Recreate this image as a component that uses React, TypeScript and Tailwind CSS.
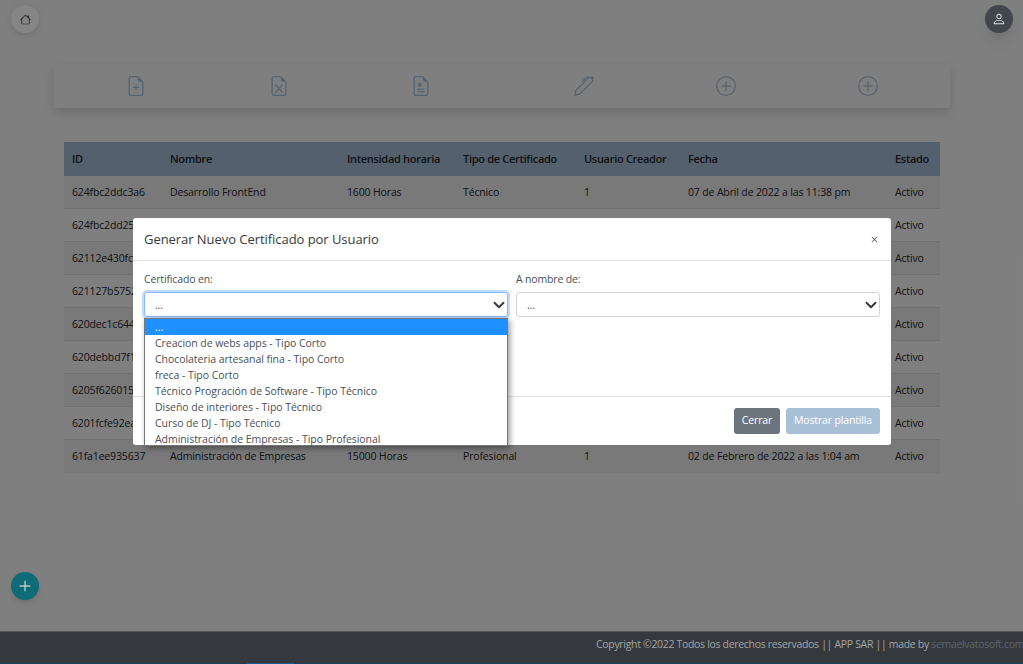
import React from "react";
import { BsHouse, BsPerson, BsFileEarmarkPlus, BsFileEarmarkExcel, BsFileEarmarkMedical, BsPen, BsPlusCircle, BsPlus, BsX } from "react-icons/bs";

const rows = [
  ["624fbc2ddc3a6", "Desarrollo FrontEnd", "1600 Horas", "Técnico", "1", "07 de Abril de 2022 a las 11:38 pm"],
  ["624fbc2dd25", "", "", "", "", ""],
  ["62112e430fc", "", "", "", "", ""],
  ["621127b5752", "", "", "", "", ""],
  ["620dec1c644", "", "", "", "", ""],
  ["620debbd7f1", "", "", "", "", ""],
  ["6205f626015", "", "", "", "", ""],
  ["6201fcfe92ea", "", "", "", "", ""],
  ["61fa1ee935637", "Administración de Empresas", "15000 Horas", "Profesional", "1", "02 de Febrero de 2022 a las 1:04 am"],
];
const options = [
  "Creacion de webs apps - Tipo Corto",
  "Chocolateria artesanal fina - Tipo Corto",
  "freca - Tipo Corto",
  "Técnico Progración de Software - Tipo Técnico",
  "Diseño de interiores - Tipo Técnico",
  "Curso de DJ - Tipo Técnico",
  "Administración de Empresas - Tipo Profesional",
];
const heads = ["ID", "Nombre", "Intensidad horaria", "Tipo de Certificado", "Usuario Creador", "Fecha", "Estado"];

function Chevron() {
  return (
    <svg viewBox="0 0 16 16" className="w-3 h-3" fill="none" stroke="#343a40" strokeWidth="2.6" strokeLinecap="round" strokeLinejoin="round">
      <path d="M2 5l6 6 6-6" />
    </svg>
  );
}

export default function App() {
  const icons = [BsFileEarmarkPlus, BsFileEarmarkExcel, BsFileEarmarkMedical];
  const icons2 = [BsPen, BsPlusCircle, BsPlusCircle];
  return (
    <div className="relative h-[664px] w-[1023px] overflow-hidden bg-white text-[10.5px] tracking-[-0.15px] text-[#212529] flex flex-col" style={{ fontFamily: '"Open Sans", sans-serif' }}>
      <div className="flex-1">
        <div className="flex justify-between pl-[11px] pr-[10px] pt-[5px]">
          <div className="w-7 h-7" />
          <div className="w-7 h-7" />
        </div>
        <div className="mt-[31px] mx-[54px] w-[896px] h-[44px] bg-white shadow-[0_5px_10px_rgba(0,0,0,0.15)] flex items-center justify-between px-[11px]">
          <div className="flex">
            {icons.map((I, i) => (
              <div key={i} className="w-[142.5px] flex justify-center text-[#a4c8e6]"><I size={20} /></div>
            ))}
          </div>
          <div className="flex">
            {icons2.map((I, i) => (
              <div key={i} className="w-[142px] flex justify-center text-[#b0c4d8]"><I size={20} /></div>
            ))}
          </div>
        </div>
        <table className="mt-[34px] ml-[64px] w-[876px] table-fixed border-separate border-spacing-0">
          <colgroup>
            <col className="w-[98px]" />
            <col className="w-[177px]" />
            <col className="w-[116px]" />
            <col className="w-[121px]" />
            <col className="w-[104px]" />
            <col className="w-[207px]" />
            <col className="w-[53px]" />
          </colgroup>
          <thead>
            <tr className="h-[34px] bg-[#a8c2d8]">
              {heads.map((h) => (
                <th key={h} className="px-2 text-left text-[11px] tracking-[-0.3px] font-semibold whitespace-nowrap">{h}</th>
              ))}
            </tr>
          </thead>
          <tbody>
            {rows.map((r, i) => (
              <tr key={r[0]} className={`h-[33px] ${i % 2 === 0 ? "bg-[#f2f2f2]" : "bg-white"}`}>
                {[...r, "Activo"].map((c, j) => (
                  <td key={j} className={`px-2 pt-[1px] whitespace-nowrap overflow-hidden ${i < 8 ? "border-b border-[#dee2e6]" : ""}`}>{c}</td>
                ))}
              </tr>
            ))}
          </tbody>
        </table>
      </div>

      {/* backdrop */}
      <div className="absolute inset-0 bg-black/50" />

      {/* items above the backdrop */}
      <div className="absolute left-[11px] top-[5px] w-7 h-7 rounded-full bg-[#858585] shadow-[0_2px_6px_rgba(0,0,0,0.12)] flex items-center justify-center text-[#1e1e1e]">
        <BsHouse size={11} />
      </div>
      <div className="absolute left-[985px] top-[5px] w-7 h-7 rounded-full bg-[#41474d] shadow-lg flex items-center justify-center text-[#dfe1e3]">
        <BsPerson size={14} />
      </div>
      <div className="absolute left-[11px] top-[572px] w-7 h-7 rounded-full bg-[#0f6b75] shadow-md flex items-center justify-center text-[#b9c9cc]">
        <BsPlus size={22} />
      </div>
      <footer className="relative h-[33px] bg-[#35393d] border-t border-[#555] border-b border-b-[#15405e] pl-[596px] pb-[5px] flex items-center whitespace-nowrap overflow-hidden text-[#a3a5a7] tracking-[-0.32px]">
        <span>Copyright ©2022 Todos los derechos reservados || APP SAR || made by <span className="text-[#5a6670]">semaelvatosoft.com</span></span>
      </footer>
      <div className="absolute left-[247px] bottom-0 w-[48px] h-px bg-[#1a5a94]" />

      {/* modal */}
      <div className="absolute left-[133px] top-[218px] w-[758px] h-[227px] bg-white rounded-[3px] text-[#495057]">
        <div className="h-[43px] border-b border-[#dee2e6] flex items-center justify-between pl-[11px] pr-[10px]">
          <h5 className="pt-[2px] text-[13px] tracking-[-0.05px] font-medium text-[#343a40]">Generar Nuevo Certificado por Usuario</h5>
          <BsX size={13} className="text-[#555]" />
        </div>
        <div className="h-[136px] border-b border-[#dee2e6] pl-[11px] pr-[11px] pt-[10px] flex gap-[8px]">
          <div className="w-[364px] relative">
            <label className="block h-[21px] leading-[16px]">Certificado en:</label>
            <div className="h-[25px] rounded-[3px] border border-[#86b7fe] shadow-[0_0_0_2px_rgba(13,110,253,0.25)] flex items-center justify-between pl-[10px] pr-[2px]">
              <span className="pt-[3px]">...</span>
              <Chevron />
            </div>
            <ul className="absolute left-0 top-[47px] w-[364px] h-[128px] bg-white border border-[#767676] shadow-[2px_2px_6px_rgba(0,0,0,0.4)] z-10 tracking-[-0.05px]">
              <li className="h-[16px] leading-[16px] pl-[10px] bg-[#1e90ff] text-white">...</li>
              {options.map((o) => (
                <li key={o} className="h-[16px] leading-[16px] pl-[10px]">{o}</li>
              ))}
            </ul>
          </div>
          <div className="w-[364px]">
            <label className="block h-[21px] leading-[16px]">A nombre de:</label>
            <div className="h-[25px] rounded-[3px] border border-[#ced4da] flex items-center justify-between pl-[10px] pr-[2px]">
              <span className="pt-[3px]">...</span>
              <Chevron />
            </div>
          </div>
        </div>
        <div className="h-[48px] flex items-center justify-end gap-[6px] pr-[11px]">
          <button className="w-[46px] h-[26px] rounded-[3px] bg-[#6c757d] text-white">Cerrar</button>
          <button className="w-[94px] h-[26px] rounded-[3px] bg-[#a8c0d6] text-white">Mostrar plantilla</button>
        </div>
      </div>
    </div>
  );
}
